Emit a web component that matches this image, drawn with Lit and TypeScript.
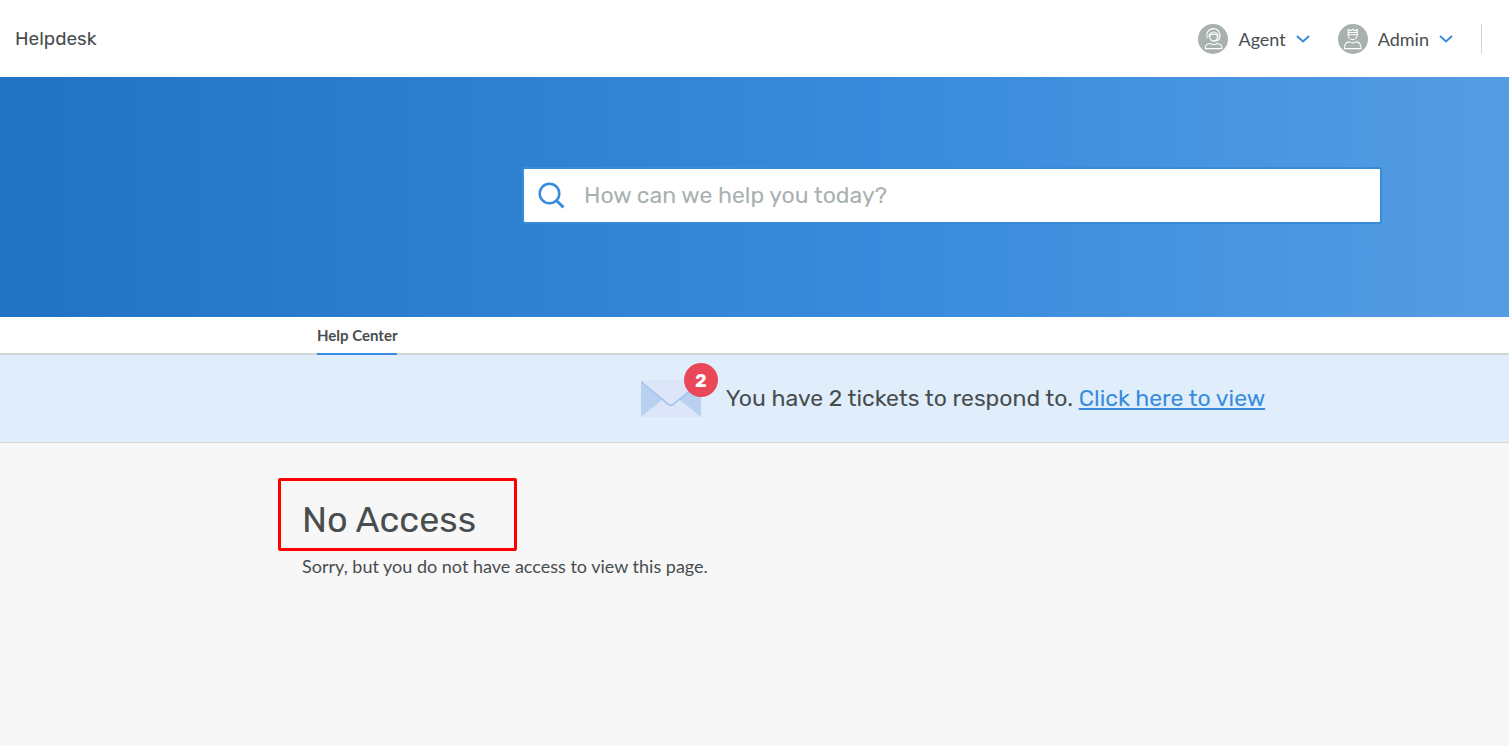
import { LitElement, html, css, svg } from "lit";
import { customElement } from "lit/decorators.js";

const agentIcon = svg`
  <circle cx="15" cy="15" r="15" fill="#a8b1b0"/>
  <g fill="none" stroke="#fff" stroke-width="1.1" stroke-linecap="round" stroke-linejoin="round">
    <path d="M9.200 13.800a6.700 6.700 0 1 1 12.600-.4q-.6 3.200-3.400 3.200h-2.200"/>
    <path d="M10.900 12.700a4.700 4.700 0 0 1 9.400 0"/>
    <path d="M12.200 10.800q-.9 2.400.2 4.400a3.700 3.700 0 0 0 6.600-.2q.9-2.200 0-4.200-3.400-1.300-6.800 0z"/>
    <path d="M7.300 24.600c0-3.300 1.700-5 4.500-5.100 1.500 1.300 5.900 1.300 7.400 0 2.800.1 4.700 1.800 4.700 5.100z"/>
  </g>`;

const adminIcon = svg`
  <circle cx="15" cy="15" r="15" fill="#a8b1b0"/>
  <g fill="none" stroke="#fff" stroke-width="1.1" stroke-linecap="round" stroke-linejoin="round">
    <path d="M10.200 5.400l2.300 1.300 2.200-1.500 2.200 1.500 2.300-1.300v5.500c0 2.600-2 4.700-4.500 4.700s-4.500-2.100-4.500-4.700z"/>
    <path d="M10.200 8.500h9M10.200 10.700h9"/>
    <path d="M6.400 24.600c0-4.400 1.700-6.600 4.900-6.700 1.500 1.300 5.300 1.300 6.800 0 3.200.1 4.900 2.300 4.900 6.700z"/>
  </g>`;

@customElement("account-menu")
class AccountMenu extends LitElement {
  static properties = { label: {}, kind: {} };
  declare label: string;
  declare kind: string;

  static styles = css`
    :host { display: block; }
    .menu {
      display: flex;
      align-items: center;
      gap: 10px;
      padding: 0;
      border: 0;
      background: none;
      color: #484d4f;
      font: 18px/30px Lato, sans-serif;
      cursor: pointer;
    }
    .avatar { width: 30px; height: 30px; }
    .chevron { width: 14px; height: 8px; }
  `;

  render() {
    return html`<button class="menu" type="button" aria-haspopup="true">
      <svg class="avatar" viewBox="0 0 30 30" aria-hidden="true">${this.kind === "agent" ? agentIcon : adminIcon}</svg>
      <span>${this.label}</span>
      <svg class="chevron" viewBox="0 0 14 8" aria-hidden="true">
        <path d="M1 1l6 5.500L13 1" fill="none" stroke="#398bdc" stroke-width="2"/>
      </svg>
    </button>`;
  }
}

@customElement("app-root")
class AppRoot extends LitElement {
  static styles = css`
    :host {
      display: flex;
      flex-direction: column;
      min-height: 100vh;
      background: #f7f7f7;
      color: #484d4f;
      font-family: Lato, sans-serif;
      font-size: 18px;
    }
    .header {
      display: flex;
      align-items: center;
      justify-content: space-between;
      padding: 24px 27px 23px 15px;
      background: #fff;
    }
    .brand { font: 19px/30px Rubik, Roboto, sans-serif; }
    .accounts { display: flex; gap: 28px; }
    .accounts::after { content: ""; border-left: 1px solid #d2d6d6; }
    .hero {
      display: flex;
      justify-content: center;
      padding: 90px 20px 93px 415px;
      background: linear-gradient(90deg, #2072c3, #398bdd 60%, #559de3);
    }
    .search {
      display: flex;
      align-items: center;
      gap: 19px;
      flex: 0 1 860px;
      box-sizing: border-box;
      padding: 0 13px 1px;
      border: 2px solid #398bdd;
      border-radius: 3px;
      background: #fff;
    }
    .glass { flex: none; width: 28px; height: 28px; }
    .query {
      flex: 1;
      min-width: 0;
      height: 52px;
      padding: 0;
      border: 0;
      outline: 0;
      background: none;
      color: #484d4f;
      font: 23px Rubik, Roboto, sans-serif;
    }
    .query::placeholder { color: #a8b1b0; opacity: 1; }
    .tabs {
      display: flex;
      padding-left: 317px;
      background: linear-gradient(#d2d6d6, #d2d6d6) bottom / 100% 2px no-repeat #fff;
    }
    .tab {
      border-bottom: 2px solid #398bdd;
      color: inherit;
      font-size: 15px;
      font-weight: 700;
      line-height: 36px;
      text-decoration: none;
    }
    .notice {
      display: flex;
      align-items: center;
      justify-content: center;
      gap: 25px;
      padding: 24px 0 24px 397px;
      border-bottom: 1px solid #d2d6d6;
      background: #e0eefc;
      font: 23px/39px Rubik, Roboto, sans-serif;
    }
    .mail { position: relative; flex: none; width: 60px; height: 37px; }
    .envelope { display: block; width: 60px; height: 37px; }
    .badge {
      position: absolute;
      top: -17px;
      right: -17px;
      width: 34px;
      height: 34px;
      border-radius: 50%;
      background: #e94858;
      color: #fff;
      font: 700 18px/36px Rubik, Inter, sans-serif;
      text-align: center;
    }
    .link { color: #398bdd; text-decoration-thickness: 2px; text-underline-offset: 2px; }
    .content { padding: 35px 20px 40px 278px; }
    .title {
      width: fit-content;
      min-width: 239px;
      box-sizing: border-box;
      margin: 0;
      padding: 17px 21px 6px;
      border: 3px solid #f00;
      border-radius: 2px;
      font: 36px/44px Rubik, Roboto, sans-serif;
    }
    .message { margin: 0; padding-left: 24px; line-height: 30px; }
  `;

  render() {
    return html`
      <header class="header">
        <span class="brand">Helpdesk</span>
        <nav class="accounts" aria-label="Accounts">
          <account-menu label="Agent" kind="agent"></account-menu>
          <account-menu label="Admin" kind="admin"></account-menu>
        </nav>
      </header>
      <form class="hero" role="search">
        <div class="search">
          <svg class="glass" viewBox="0 0 28 28" aria-hidden="true">
            <g fill="none" stroke="#398bdd" stroke-width="2.500">
              <circle cx="12.500" cy="12.500" r="9.800"/><path d="M19.500 19.500l7 7" stroke-width="3"/>
            </g>
          </svg>
          <input class="query" type="text" aria-label="Search" placeholder="How can we help you today?">
        </div>
      </form>
      <nav class="tabs" aria-label="Sections"><a class="tab" href="#help">Help Center</a></nav>
      <section class="notice">
        <span class="mail">
          <svg class="envelope" viewBox="0 0 60 37" aria-hidden="true">
            <rect width="60" height="37" rx="2" fill="#bad0f1"/>
            <path d="M1 36L25 17h10l24 19q-.5 1-2 1H3q-1.500 0-2-1z" fill="#dde6f8"/>
            <path d="M0 1.500Q.5 0 2 0h56q1.500 0 2 1.500L32 24.500q-2.200 1.600-4.400 0z" fill="#dde6f8"/>
            <path d="M.5 2l27.100 22.500q2.200 1.600 4.400 0L59.500 2" fill="none" stroke="#a3c2f0" stroke-width="1.600"/>
          </svg>
          <span class="badge">2</span>
        </span>
        <span>You have 2 tickets to respond to. <a class="link" href="#tickets">Click here to view</a></span>
      </section>
      <main class="content">
        <h1 class="title">No Access</h1>
        <p class="message">Sorry, but you do not have access to view this page.</p>
      </main>
    `;
  }
}
